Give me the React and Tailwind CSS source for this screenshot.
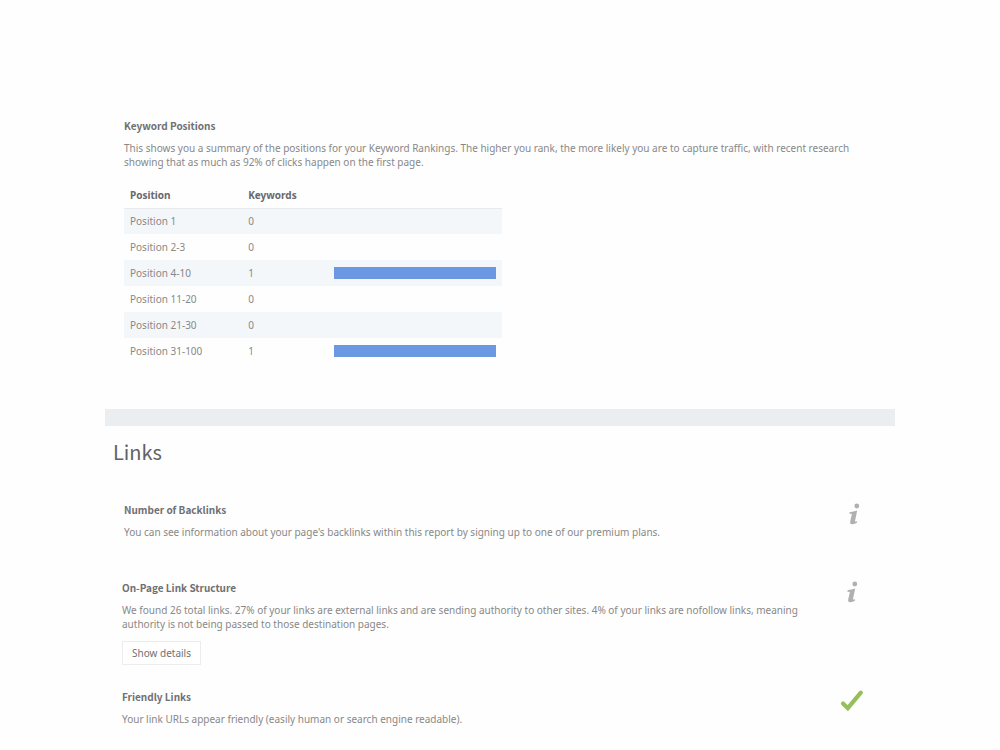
import React from 'react';

const positions = [
  { label: 'Position 1', count: 0 },
  { label: 'Position 2-3', count: 0 },
  { label: 'Position 4-10', count: 1 },
  { label: 'Position 11-20', count: 0 },
  { label: 'Position 21-30', count: 0 },
  { label: 'Position 31-100', count: 1 },
];

const maxCount = Math.max(...positions.map((p) => p.count));

function Title({ children }) {
  return (
    <h3 className="font-['Noto_Sans_CJK_SC','Noto_Sans',sans-serif] text-[10px] leading-4 font-bold text-[#6f7074]">
      {children}
    </h3>
  );
}

function InfoIcon() {
  return (
    <svg viewBox="0 0 24 24" className="w-6 h-6" fill="#b0b0b0" aria-label="Info">
      <circle cx="14.8" cy="4" r="2.4" />
      <path d="M7.6 10.3Q11.4 9.3 15.2 8.4L13 19Q12.9 20 15.2 19.2L14.9 20.8Q12.4 22.4 10 22.2Q7.7 21.8 8.2 19.4L9.9 12Q9 11.4 7.4 11.8Z" />
    </svg>
  );
}

function PassIcon() {
  return (
    <svg viewBox="0 0 24 24" className="w-6 h-6" aria-label="Passed">
      <path d="M3 14.6L7.8 19.2L20.8 3.7" fill="none" stroke="#98be5c" strokeWidth="4.2" strokeLinecap="round" />
    </svg>
  );
}

function Check({ title, text, icon, children }) {
  return (
    <div className="flex items-start justify-between">
      <div className="flex-1 max-w-[700px]">
        <Title>{title}</Title>
        <p className="mt-[7px] leading-[14px]">{text}</p>
        {children}
      </div>
      <div className="w-8 flex justify-center">{icon}</div>
    </div>
  );
}

export default function App() {
  return (
    <div className="min-h-screen bg-[#fefefe] font-['Noto_Sans',sans-serif] text-[10px] text-[#888888]">
      <main className="w-[79%] mx-auto pt-[118px]">
        <section className="px-[19px] pb-11">
          <Title>Keyword Positions</Title>
          <p className="mt-[7px] leading-[14px]">
            This shows you a summary of the positions for your Keyword Rankings. The higher you rank, the more likely you are to capture traffic, with recent research showing that as much as 92% of clicks happen on the first page.
          </p>

          <table className="mt-[13px] w-[378px] max-w-full table-fixed border-collapse text-left">
            <thead>
              <tr className="h-[26px] border-b border-[#e8ebed] text-[#67686b]">
                <th className="w-[31%] px-[6px] pt-px font-bold">Position</th>
                <th className="w-[23%] pl-[7px] pt-px font-bold">Keywords</th>
                <th className="px-[6px]"></th>
              </tr>
            </thead>
            <tbody>
              {positions.map((p) => (
                <tr key={p.label} className="h-[26px] odd:bg-[#f4f7fa]">
                  <td className="px-[6px]">{p.label}</td>
                  <td className="pl-[7px]">{p.count}</td>
                  <td className="px-[6px]">
                    <div className="h-3 bg-[#6c98e3]" style={{ width: `${(p.count / maxCount) * 100}%` }}></div>
                  </td>
                </tr>
              ))}
            </tbody>
          </table>
        </section>

        <div className="h-[17px] mt-px bg-[#ebeef1]"></div>

        <section>
          <h2 className="px-2 pt-[10px] font-['Noto_Sans_CJK_SC','Noto_Sans',sans-serif] text-[20px] leading-8 text-[#5f6266]">Links</h2>

          <div className="pt-[34px] pl-[19px] pr-[25px]">
            <Check
              title="Number of Backlinks"
              text="You can see information about your page's backlinks within this report by signing up to one of our premium plans."
              icon={<InfoIcon />}
            />
          </div>

          <div className="pt-[41px] pb-4 pl-[17px] pr-[27px] flex flex-col gap-6">
            <Check
              title="On-Page Link Structure"
              text="We found 26 total links. 27% of your links are external links and are sending authority to other sites. 4% of your links are nofollow links, meaning authority is not being passed to those destination pages."
              icon={<InfoIcon />}
            >
              <button className="mt-[10px] h-6 px-[9px] border border-[#ececec] bg-white text-[#707174]">Show details</button>
            </Check>
            <Check
              title="Friendly Links"
              text="Your link URLs appear friendly (easily human or search engine readable)."
              icon={<PassIcon />}
            />
          </div>
        </section>
      </main>
    </div>
  );
}
